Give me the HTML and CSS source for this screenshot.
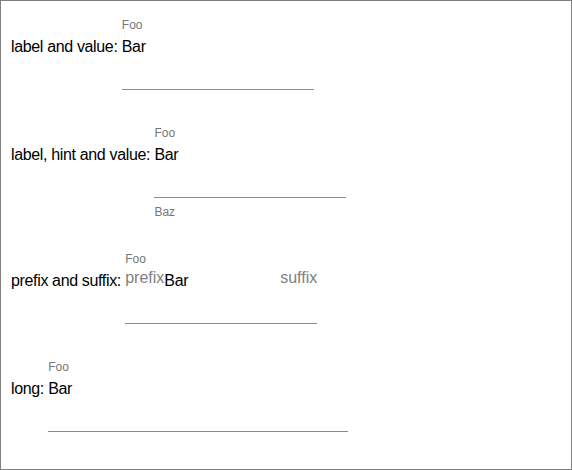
FILE: index.html
```html
<!DOCTYPE html>
<html>
<head>
	<title>Form fields</title>
	<link rel="stylesheet" href="styles.css">
</head>
<body>
	<div class="frame">
		<!-- label and value -->
		<div class="row">
			<span class="row-label">label and value:</span>
			<div class="field">
				<div class="float-label">Foo</div>
				<div class="input-line">
					<span class="value">Bar</span>
				</div>
				<div class="underline"></div>
			</div>
		</div>

		<!-- with hint -->
		<div class="row">
			<span class="row-label">label, hint and value:</span>
			<div class="field">
				<div class="float-label">Foo</div>
				<div class="input-line">
					<span class="value">Bar</span>
				</div>
				<div class="underline"></div>
				<div class="hint">Baz</div>
			</div>
		</div>

		<!-- prefix / suffix -->
		<div class="row">
			<span class="row-label">prefix and suffix:</span>
			<div class="field">
				<div class="float-label">Foo</div>
				<div class="input-line">
					<span class="affix">prefix</span>
					<span class="value">Bar</span>
					<span class="affix">suffix</span>
				</div>
				<div class="underline"></div>
			</div>
		</div>

		<!-- long -->
		<div class="row">
			<span class="row-label">long:</span>
			<div class="field field-long">
				<div class="float-label">Foo</div>
				<div class="input-line">
					<span class="value">Bar</span>
				</div>
				<div class="underline"></div>
			</div>
		</div>
	</div>
</body>
</html>
```

FILE: styles.css
```css
/* page */
html, body {
  margin: 0;
  padding: 0;
  background-color: #fff;
}

body {
  font-family: "Liberation Sans", Arial, sans-serif;
  color: #000;
}

.frame {
  width: 572px;
  height: 470px;
  box-sizing: border-box;
  border: 1px solid #808080;
  padding: 17px 0 0 10px;
}

/* rows */
.row {
  display: flex;
  align-items: flex-start;
  margin-bottom: 36px;
}

.row-label {
  font-size: 16px;
  letter-spacing: -0.35px;
  line-height: 20px;
  margin-top: 19px;
  margin-right: 4.3px;
  white-space: nowrap;
}

/* field */
.field {
  width: 192px;
  display: flex;
  flex-direction: column;
}

.field-long {
  width: 300px;
}

.float-label {
  font-size: 12px;
  line-height: 14px;
  color: #767676;
}

.input-line {
  display: flex;
  align-items: flex-start;
  margin-top: 5px;
  height: 20px;
  font-size: 16px;
  line-height: 20px;
}

.value {
  flex: 1;
  letter-spacing: -0.35px;
  color: #000;
}

.affix {
  color: #808080;
  margin-top: -3px;
}

.underline {
  margin-top: 32px;
  height: 1px;
  background-color: #8c8c8c;
}

.hint {
  font-size: 12px;
  line-height: 14px;
  color: #767676;
  margin: 7px 0 -3px;
}
```
